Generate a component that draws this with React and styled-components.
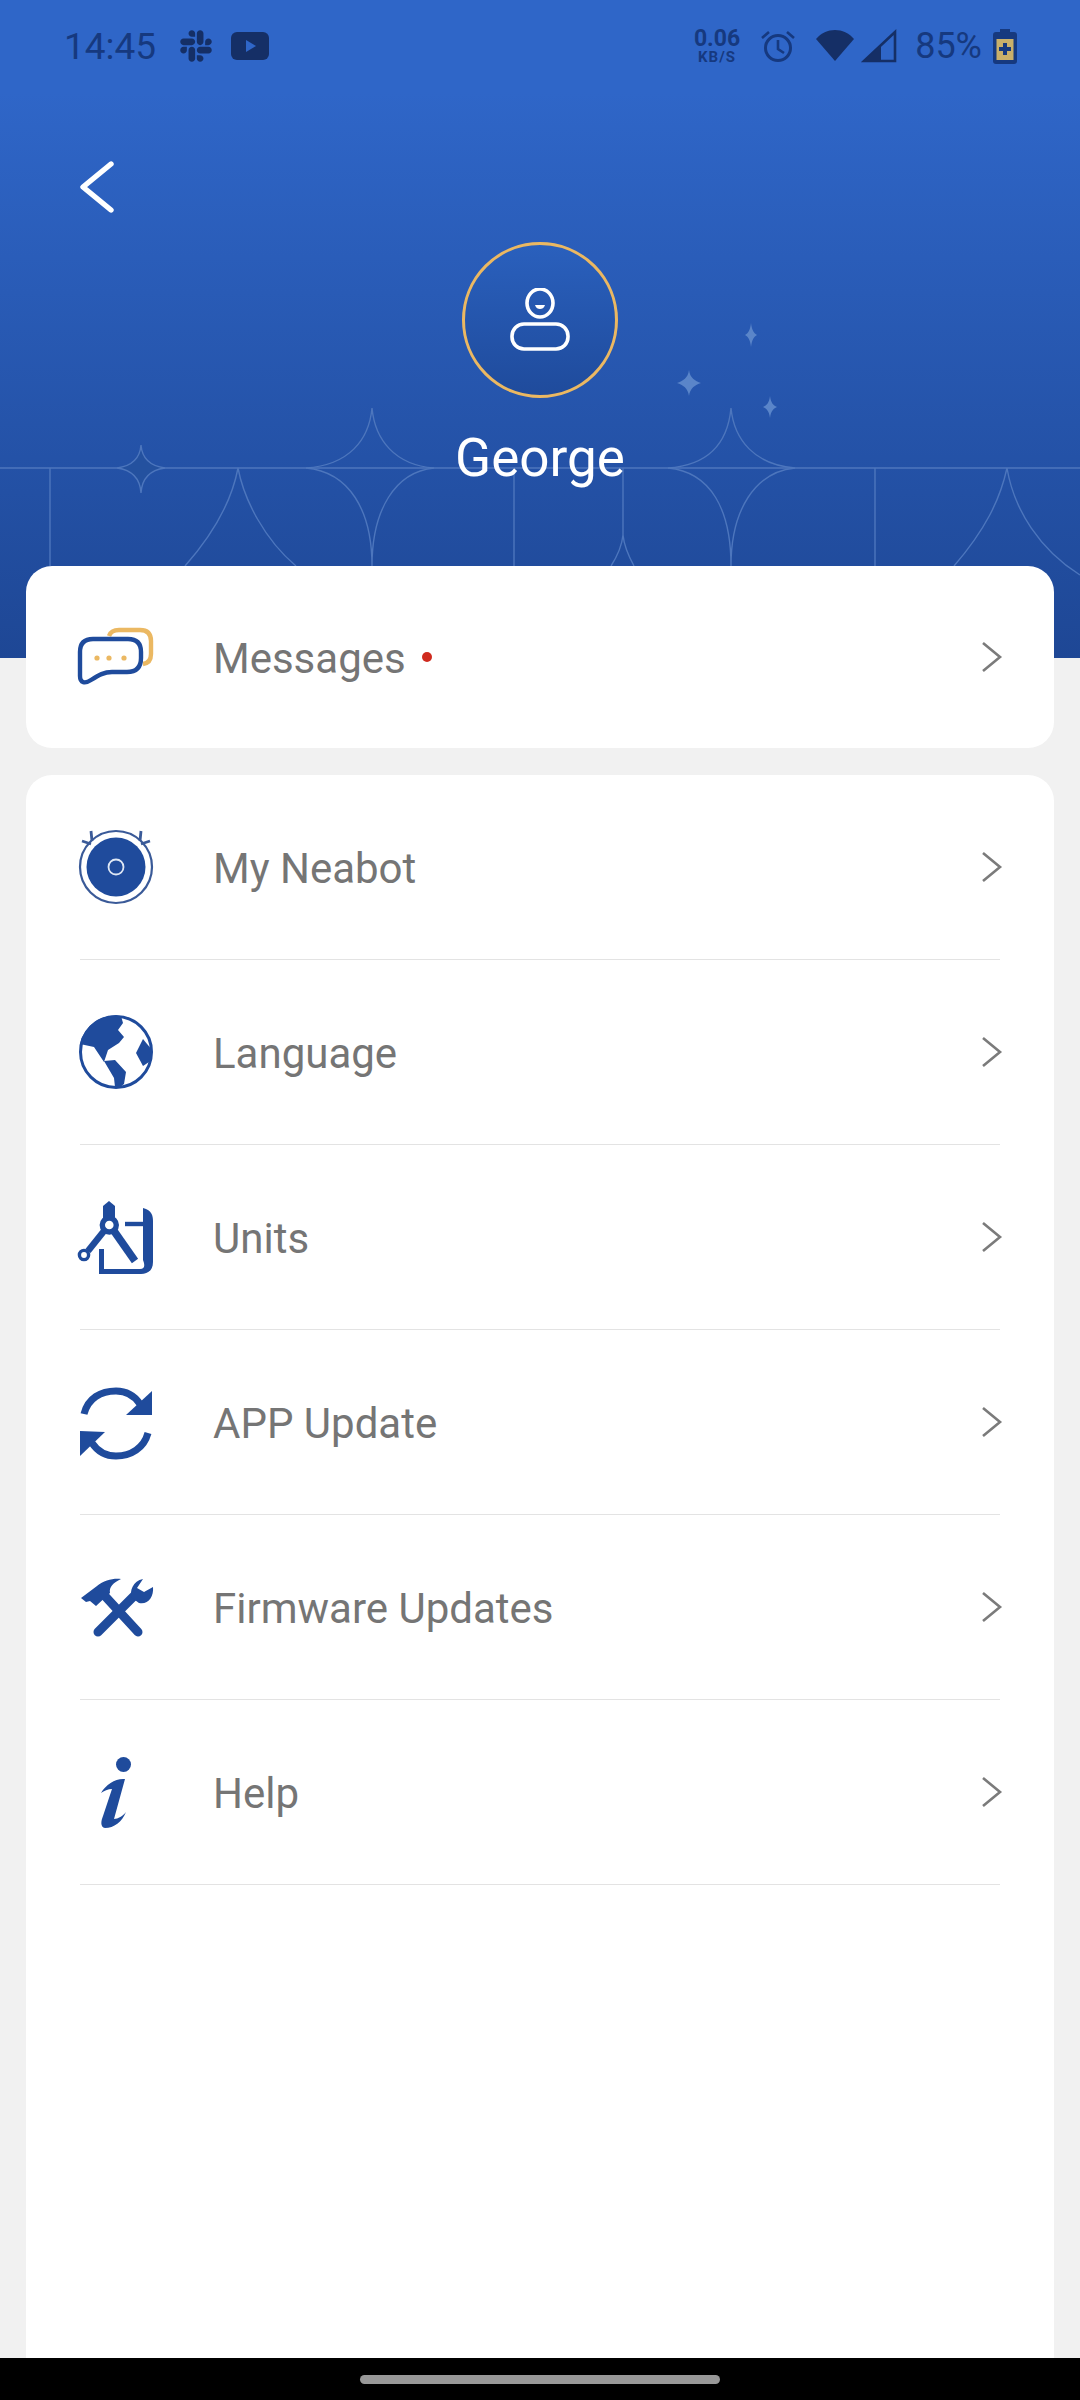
import styled, { createGlobalStyle } from 'styled-components';
import { FaSlack } from 'react-icons/fa';

const NAVY = '#1f4b9c';
const GOLD = '#ebb862';

const IconMessages = () => (
    <svg width="80" height="80" viewBox="26 7 80 80" fill="none">
        <path d="M59 26q2-6 10-6h21q11 0 11 11v13q0 9-8 10" stroke={GOLD} strokeWidth="4.4" />
        <path d="M43 29h35q13 0 13 13v6q0 14-14 14H62c-8 0-13 3-21 8-6 4-11 3-11-4V42q0-13 13-13z" stroke={NAVY} strokeWidth="4.4" />
        <circle cx="47" cy="48" r="2.6" fill={GOLD} />
        <circle cx="59" cy="48" r="2.6" fill={GOLD} />
        <circle cx="74" cy="48" r="2.6" fill={GOLD} />
    </svg>
);

const IconRobot = () => (
    <svg width="80" height="80" viewBox="16 7 80 80" fill="none">
        <circle cx="56" cy="47" r="36" stroke="#3a5a98" strokeWidth="2.2" />
        <circle cx="56" cy="47" r="29.5" fill={NAVY} />
        <circle cx="56" cy="47" r="7.5" stroke="#dfe8f5" strokeWidth="1.8" />
        <path d="M31 11l1 10M22 21l9 3M81 11l-1 10M90 21l-9 3" stroke="#3a5a98" strokeWidth="2.8" />
    </svg>
);

const IconGlobe = () => (
    <svg width="80" height="80" viewBox="16 12 80 80" fill="none">
        <circle cx="56" cy="52" r="35.5" stroke={NAVY} strokeWidth="3" />
        <path fill={NAVY} d="M20 44A36 36 0 0 1 61 16l2 7-5 7 6 7-5 6-11 7-4 12-10-15-14-3z" />
        <path fill={NAVY} d="M44 61l11-1 11 12-2 12-5 4-4-1-1-9-10-17z" />
        <path fill={NAVY} d="M83 39l9 11 0 10-9 6-7-13z" />
    </svg>
);

const IconUnits = () => (
    <svg width="80" height="80" viewBox="16 16 80 80" fill="none">
        <path fill={NAVY} d="M43 37V25l6-5 6 5v12z" />
        <circle cx="49.3" cy="44" r="7" stroke={NAVY} strokeWidth="5.4" />
        <path d="M44 50L28 70" stroke={NAVY} strokeWidth="6.6" />
        <circle cx="24" cy="74" r="4.6" stroke={NAVY} strokeWidth="3.4" />
        <path d="M54 50l21 30" stroke={NAVY} strokeWidth="7.6" />
        <path fill={NAVY} d="M83 27c9 2 10 8 10 13v41c0 9-6 12-12 12H39V68h5v20h36c5 0 5-4 3-9z" />
        <path d="M65 43h18" stroke={NAVY} strokeWidth="4.4" />
    </svg>
);

const IconRefresh = () => (
    <svg width="80" height="80" viewBox="16 11 80 80" fill="none">
        <path d="M24 43C28 27 41 20 56 20c10 0 18 4 24 13" stroke={NAVY} strokeWidth="7" />
        <path fill={NAVY} d="M92 20v24H66z" />
        <path d="M88 62C84 77 71 85 56 85c-10 0-18-4-24-13" stroke={NAVY} strokeWidth="7" />
        <path fill={NAVY} d="M20 60v25l25-24z" />
    </svg>
);

const IconTools = () => (
    <svg width="80" height="80" viewBox="16 16 80 80" fill="none">
        <path d="M44 44l34 37" stroke={NAVY} strokeWidth="9" strokeLinecap="round" />
        <path d="M38 81l37-37" stroke={NAVY} strokeWidth="9" strokeLinecap="round" />
        <path fill={NAVY} d="M21 47l16-12c7-6 17-8 24-7-8 4-12 8-11 14L36 55l-6-5-4 1z" />
        <path fill={NAVY} d="M83 28c-10 2-14 12-11 19l7 5c9 2 15-6 14-16l-9 5-7-4z" />
    </svg>
);

const IconInfo = () => (
    <svg width="80" height="80" viewBox="16 20 80 80">
        <circle cx="63.5" cy="32.5" r="7.5" fill={NAVY} />
        <path fill={NAVY} d="M41 61c5-9 15-15 24-14L54 87c4 0 9-3 12-7-4 10-12 16-21 16-5-1-4-7-2-12l9-27c-4 0-8 2-11 4z" />
    </svg>
);

const rows = [
    { label: 'My Neabot', icon: <IconRobot /> },
    { label: 'Language', icon: <IconGlobe /> },
    { label: 'Units', icon: <IconUnits /> },
    { label: 'APP Update', icon: <IconRefresh /> },
    { label: 'Firmware Updates', icon: <IconTools /> },
    { label: 'Help', icon: <IconInfo /> },
];

const Chevron = () => (
    <svg width="24" height="34" viewBox="0 0 24 34" fill="none">
        <path d="M3 3l17 14L3 31" stroke="#7b7b7b" strokeWidth="2.6" />
    </svg>
);

const MenuRow = ({ icon, label, dot }) => (
    <Row>
        <IconSlot>{icon}</IconSlot>
        <Label>{label}</Label>
        {dot && <Dot />}
        <ChevronSlot><Chevron /></ChevronSlot>
    </Row>
);

const App = () => {
    return (
        <Page>
            <Global />
            <Header>
                <Pattern width="1080" height="658" viewBox="0 0 1080 658" fill="none">
                    <g stroke="#4d76bd" strokeWidth="1.4">
                        <path d="M0 468h1080M50 468v98M514 468v98M623 468v67M875 468v98" />
                        <path d="M141 445c1 13 9 21 24 23-15 2-23 10-24 25-1-15-9-23-24-25 15-2 23-10 24-23z" fill="#24519f" />
                        <path d="M372 408c3 32 23 57 62 60-39 4-62 42-62 98 0-56-23-94-66-98 43-3 63-28 66-60z" />
                        <path d="M731 408c3 32 24 57 64 60-40 4-64 42-64 98 0-56-20-94-63-98 43-3 60-28 63-60z" />
                        <path d="M185 566c30-34 47-66 53-98 6 32 27 72 58 98" />
                        <path d="M611 566c7-11 11-21 12-31 1 10 5 20 11 31" />
                        <path d="M954 566c31-36 46-66 53-98 7 42 33 82 73 107" />
                    </g>
                    <g fill="#5a85c9">
                        <path d="M751 323c1 8 3 10 6 12-3 2-5 4-6 12-1-8-3-10-6-12 3-2 5-4 6-12z" />
                        <path d="M689 370c1 8 6 11 12 13-6 2-11 5-12 13-1-8-6-11-12-13 6-2 11-5 12-13z" />
                        <path d="M770 396c1 7 3 9 7 11-4 2-6 4-7 11-1-7-3-9-7-11 4-2 6-4 7-11z" />
                    </g>
                </Pattern>
                <StatusBar>
                    <StatusGroup>
                        <Clock>14:45</Clock>
                        <SlackMark><FaSlack size={36} /></SlackMark>
                        <svg width="38" height="28" viewBox="0 0 38 28">
                            <rect width="38" height="28" rx="6" fill="#152f66" />
                            <path d="M15 8l10 6-10 6z" fill="#2f66c8" />
                        </svg>
                    </StatusGroup>
                    <StatusGroup>
                        <Speed>
                            <SpeedValue>0.06</SpeedValue>
                            <SpeedUnit>KB/S</SpeedUnit>
                        </Speed>
                        <svg width="36" height="34" viewBox="0 0 36 34" fill="none" stroke="#16397f">
                            <circle cx="18" cy="19" r="12.5" strokeWidth="3" />
                            <path d="M18 11v9l6 4M2 9l7-6M34 9l-7-6" strokeWidth="2.6" />
                        </svg>
                        <Wifi width="38" height="32" viewBox="0 0 38 32">
                            <path d="M0 9C5 3 12 0 19 0s14 3 19 9L19 31z" fill="#152f66" />
                        </Wifi>
                        <svg width="36" height="34" viewBox="0 0 36 34">
                            <path d="M34 3v29H3z" fill="none" stroke="#152f66" strokeWidth="2.6" />
                            <path d="M20 16v16H3z" fill="#152f66" />
                        </svg>
                        <Percent>85%</Percent>
                        <svg width="24" height="35" viewBox="0 0 24 35">
                            <path d="M7 0h10v3h4q3 0 3 3v26q0 3-3 3H3q-3 0-3-3V6q0-3 3-3h4z" fill="#16397f" />
                            <rect x="3.5" y="10" width="17" height="21" fill="#c9b06a" />
                            <path d="M10 14h4v4h4v4h-4v4h-4v-4H6v-4h4z" fill="#16397f" />
                        </svg>
                    </StatusGroup>
                </StatusBar>
                <BackButton>
                    <svg width="36" height="56" viewBox="0 0 36 56" fill="none">
                        <path d="M32 5L4 28l28 23" stroke="#fff" strokeWidth="5.4" strokeLinecap="round" strokeLinejoin="round" />
                    </svg>
                </BackButton>
                <Avatar>
                    <svg width="64" height="64" viewBox="0 0 64 64" fill="none" stroke="#fff" strokeWidth="3.6">
                        <ellipse cx="32" cy="15" rx="13" ry="14" />
                        <path d="M27 17h10c-1 3-3 4-5 4s-4-1-5-4z" fill="#fff" stroke="none" />
                        <rect x="4" y="36" width="56" height="25" rx="12" />
                    </svg>
                </Avatar>
                <Name>George</Name>
            </Header>
            <Content>
                <MessagesCard>
                    <MenuRow icon={<IconMessages />} label="Messages" dot />
                </MessagesCard>
                <MenuCard>
                    {rows.map(row => (
                        <MenuRow key={row.label} icon={row.icon} label={row.label} />
                    ))}
                </MenuCard>
            </Content>
            <NavBar>
                <HomePill />
            </NavBar>
        </Page>
    )
}

//styles
const Global = createGlobalStyle`
    html, body {
        margin: 0;
        padding: 0;
        background: #f1f1f1;
    }
    * {
        box-sizing: border-box;
    }
`

const Page = styled.div`
    width: 1080px;
    height: 2400px;
    display: flex;
    flex-direction: column;
    overflow: hidden;
    background: #f1f1f1;
    font-family: Roboto, "Liberation Sans", sans-serif;
`

const Header = styled.header`
    position: relative;
    flex: none;
    height: 658px;
    display: flex;
    flex-direction: column;
    background: linear-gradient(180deg, #2f66c8 0%, #2f66c8 14%, #1e4795 100%);
`

const Pattern = styled.svg`
    position: absolute;
    top: 0;
    left: 0;
`

const StatusBar = styled.div`
    position: relative;
    height: 92px;
    padding: 0 63px 0 64px;
    display: flex;
    align-items: center;
    justify-content: space-between;
`

const StatusGroup = styled.div`
    display: flex;
    align-items: center;
    svg {
        flex: none;
    }
`

const Clock = styled.span`
    font-size: 37px;
    color: #16397f;
    margin-right: 22px;
`

const SlackMark = styled.span`
    display: flex;
    color: #152f66;
    margin-right: 17px;
`

const Speed = styled.div`
    display: flex;
    flex-direction: column;
    align-items: center;
    color: #16397f;
    font-weight: 700;
    margin-right: 20px;
`

const SpeedValue = styled.span`
    font-size: 23px;
    line-height: 22px;
`

const SpeedUnit = styled.span`
    font-size: 15px;
    line-height: 15px;
    letter-spacing: 1px;
`

const Wifi = styled.svg`
    margin-left: 20px;
    margin-right: 7px;
`

const Percent = styled.span`
    font-size: 36px;
    color: #16397f;
    margin-left: 18px;
    margin-right: 11px;
`

const BackButton = styled.button`
    position: relative;
    align-self: flex-start;
    display: flex;
    margin: 67px 0 0 79px;
    padding: 0;
    border: none;
    background: none;
`

const Avatar = styled.div`
    position: relative;
    align-self: center;
    width: 156px;
    height: 156px;
    margin-top: 27px;
    display: flex;
    align-items: center;
    justify-content: center;
    border: 3.5px solid ${GOLD};
    border-radius: 50%;
    background: linear-gradient(180deg, #2a60bd, #1f4b9c);
`

const Name = styled.h1`
    position: relative;
    margin: 30px 0 0;
    text-align: center;
    color: #fff;
    font-size: 53px;
    font-weight: 400;
    line-height: 60px;
`

const Content = styled.main`
    position: relative;
    flex: 1;
    min-height: 0;
    margin-top: -92px;
    padding: 0 26px;
    display: flex;
    flex-direction: column;
    gap: 27px;
`

const MessagesCard = styled.section`
    flex: none;
    height: 182px;
    display: flex;
    align-items: center;
    padding: 0 54px 0 50px;
    background: #fff;
    border-radius: 26px;
`

const MenuCard = styled.section`
    flex: 1;
    padding: 0 54px 0 50px;
    background: #fff;
    border-radius: 26px 26px 0 0;
`

const Row = styled.div`
    width: 100%;
    height: 185px;
    display: flex;
    align-items: center;
    ${MenuCard} & {
        border-bottom: 1.5px solid #e3e3e3;
        margin-left: 4px;
        width: calc(100% - 4px);
    }
`

const IconSlot = styled.div`
    flex: none;
    width: 80px;
    height: 80px;
    margin-right: 57px;
    ${MenuCard} & {
        margin-left: -4px;
    }
    svg {
        display: block;
    }
`

const Label = styled.span`
    font-size: 42px;
    line-height: 50px;
    padding-top: 4px;
    color: #757575;
`

const Dot = styled.span`
    width: 10px;
    height: 10px;
    margin-left: 16px;
    border-radius: 50%;
    background: #cf2a1e;
`

const ChevronSlot = styled.div`
    display: flex;
    margin-left: auto;
    margin-right: -4px;
`

const NavBar = styled.footer`
    flex: none;
    height: 42px;
    padding-top: 17px;
    display: flex;
    justify-content: center;
    background: #000;
`

const HomePill = styled.div`
    width: 360px;
    height: 9px;
    border-radius: 5px;
    background: #989898;
`

export default App;
